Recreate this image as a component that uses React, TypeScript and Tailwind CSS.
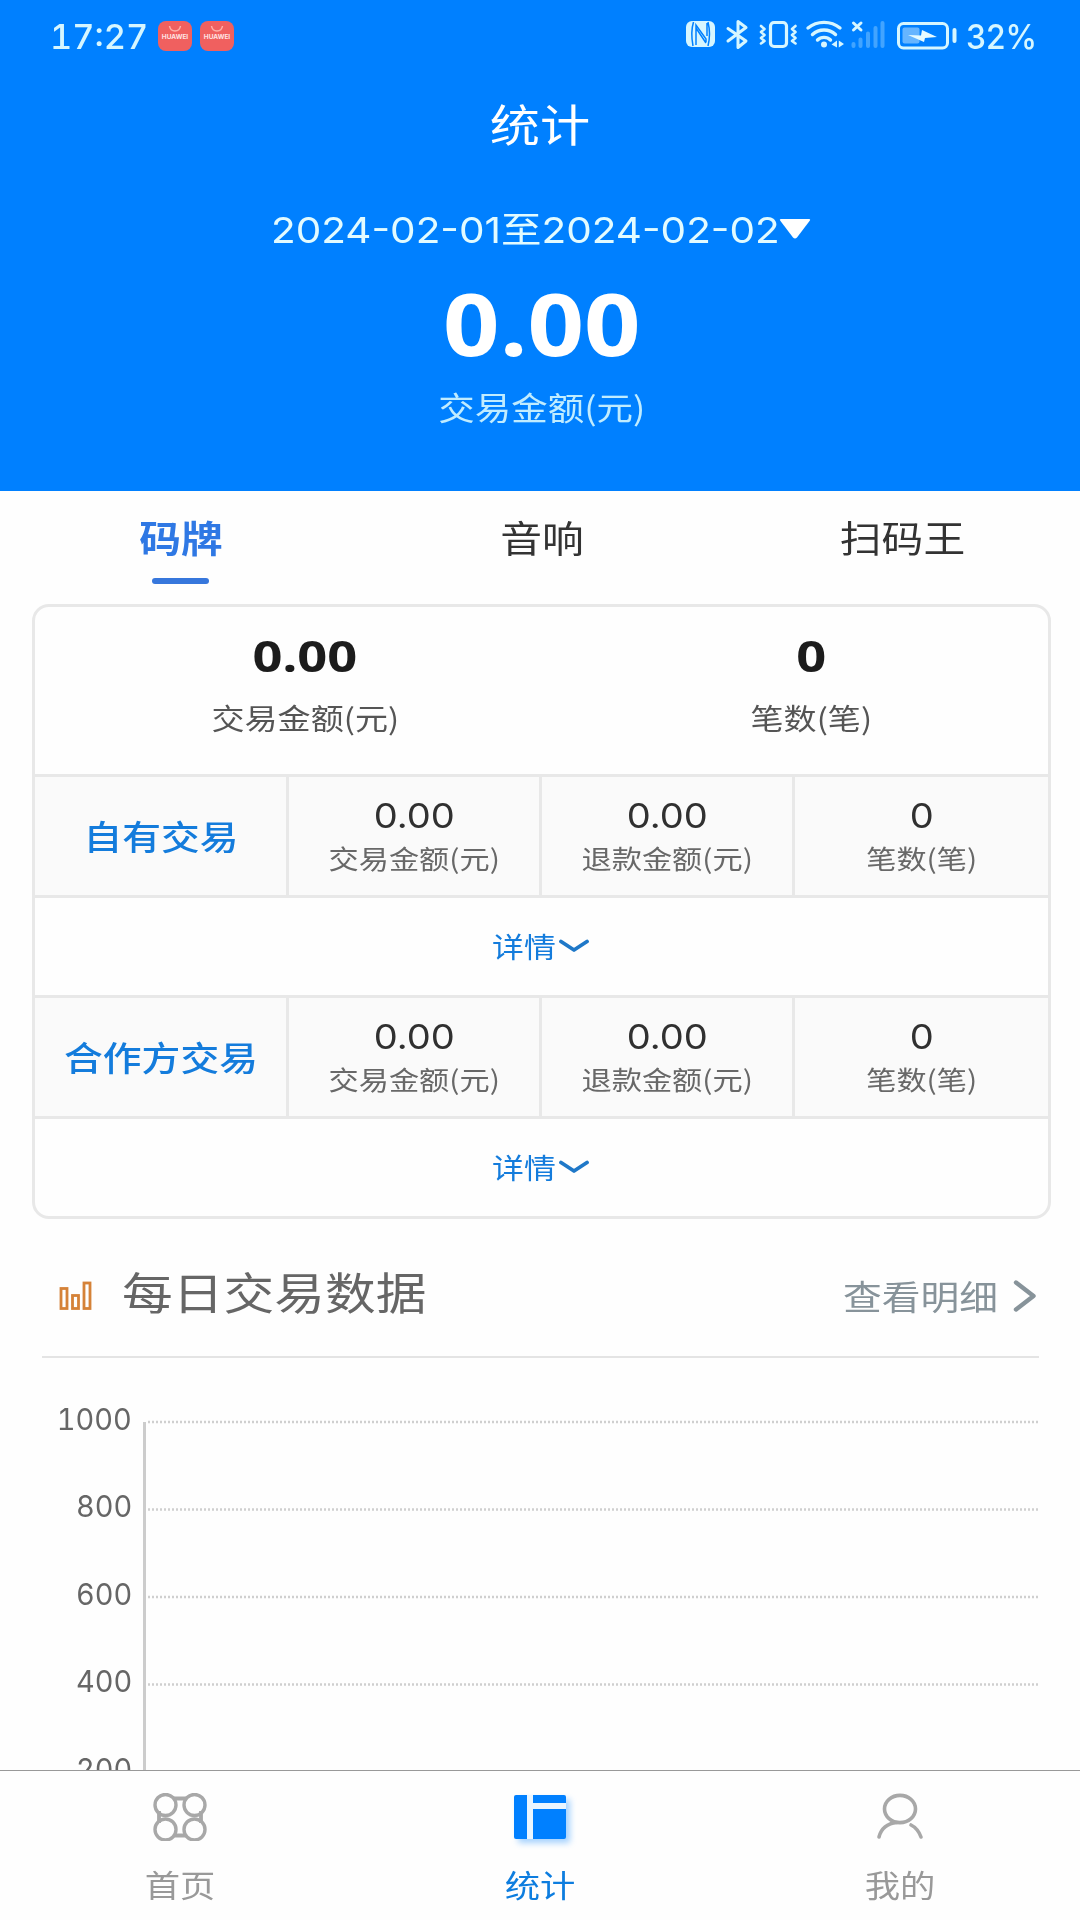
import type { ReactNode } from "react";
import clsx from "clsx";

interface Stat {
  value: string;
  label: string;
}

interface TradeGroup {
  title: string;
  stats: Stat[];
}

const tabs = ["码牌", "音响", "扫码王"];

const groups: TradeGroup[] = [
  {
    title: "自有交易",
    stats: [
      { value: "0.00", label: "交易金额(元)" },
      { value: "0.00", label: "退款金额(元)" },
      { value: "0", label: "笔数(笔)" },
    ],
  },
  {
    title: "合作方交易",
    stats: [
      { value: "0.00", label: "交易金额(元)" },
      { value: "0.00", label: "退款金额(元)" },
      { value: "0", label: "笔数(笔)" },
    ],
  },
];

const axisLabels = ["1000", "800", "600", "400", "200"];

// Wide glyphs, the whole UI uses an extended face
const Wide = ({ children, className }: { children: ReactNode; className?: string }) => (
  <span className={clsx("inline-block whitespace-nowrap", className ?? "scale-x-[1.14]")}>
    {children}
  </span>
);

const AppBadge = () => (
  <div className="flex h-[30px] w-[34px] flex-col items-center rounded-[8px] bg-[#f0605f]">
    <svg width="14" height="8" viewBox="0 0 14 8" className="mt-[4px]" fill="none">
      <path d="M1.5 1 C2.5 7.5 11.500 7.5 12.5 1" stroke="#ffb0a8" strokeWidth="1.5" />
    </svg>
    <span className="mt-[1px] font-['Inter'] text-[6.500px] leading-[7px] font-bold text-[#ffe4e4]">
      HUAWEI
    </span>
  </div>
);

const StatusIcons = () => (
  <svg width="276" height="36" viewBox="684 17 276 36" fill="none" stroke="#d6f6ff">
    {/* nfc */}
    <rect x="686" y="21" width="29" height="26" rx="6" fill="#d6f6ff" stroke="none" />
    <path
      d="M693.500 22 C691 30 691.500 38 693 46 M696 45 V25 L706 39 V42 M696 28 L706 43 M707 23 V36 M708 22 C710 30 710 38 708 46"
      stroke="#0080ff"
      strokeWidth="1.5"
    />
    {/* bluetooth */}
    <path
      d="M728 28.500 L746 41 L738 47.500 V21.500 L746 27.500 L728 41"
      strokeWidth="3"
      strokeLinejoin="round"
      strokeLinecap="round"
    />
    {/* vibrate */}
    <rect x="770.500" y="22.500" width="16" height="24" rx="3.500" strokeWidth="3.200" />
    <path
      d="M761 26 l3.500 3 l-3.500 3 l3.500 3 l-3.500 3 l3.500 3 l-3.500 2.500 M795.500 26 l-3.500 3 l3.500 3 l-3.500 3 l3.500 3 l-3.500 3 l3.500 2.500"
      strokeWidth="2.600"
      strokeLinejoin="round"
      strokeLinecap="round"
    />
    {/* wifi */}
    <path
      d="M808 28 C817 20.500 831 20.500 840 28 M812.500 34.500 C819 28.500 829 28.500 835.500 34.500 M817.500 40 C821 36.500 827 36.500 830.500 40"
      strokeWidth="3.400"
      strokeLinecap="round"
    />
    <circle cx="824" cy="44.500" r="3" fill="#d6f6ff" stroke="none" />
    <path d="M837 40.500 V47.500 L831.500 44.500 Z M838.800 40.500 V47.500 L844 44 Z" fill="#d6f6ff" stroke="none" />
    {/* signal */}
    <path d="M853.500 23 L861 30 M861 23 L853.500 30" strokeWidth="3" strokeLinecap="round" />
    <path
      d="M853.500 44 V46 M860.500 39.500 V46 M868 33.500 V46 M875.500 28 V46 M882.500 23 V46"
      stroke="#42a4ff"
      strokeWidth="4"
      strokeLinecap="round"
    />
    {/* battery */}
    <rect x="898.500" y="23.500" width="49" height="24.500" rx="5" strokeWidth="3" />
    <rect x="902.500" y="27.500" width="17" height="16" rx="2" fill="#66b5ff" stroke="none" />
    <path d="M908 35 L921 35.500 L922 30 L937 37 L925 38 L924 42 Z" fill="#e6fbff" stroke="none" />
    <path d="M954.500 30 V41" strokeWidth="4" strokeLinecap="round" />
  </svg>
);

const HomeIcon = () => (
  <svg width="54" height="48" viewBox="0 0 54 48" fill="none" stroke="#a8a8a8" strokeWidth="3.400">
    <path d="M21 5.500 H33 M21 42.500 H33 M6 18 V30 M48 18 V30" strokeWidth="3.800" />
    <circle cx="12.500" cy="12" r="10.500" />
    <circle cx="41.500" cy="12" r="10.500" />
    <circle cx="12.500" cy="36.500" r="10.500" />
    <circle cx="41.500" cy="36.500" r="10.500" />
  </svg>
);

const StatsIcon = () => (
  <svg
    width="54"
    height="48"
    viewBox="0 0 54 48"
    className="overflow-visible drop-shadow-[4px_4px_3px_rgba(0,128,255,0.35)]"
    fill="#0080ff"
  >
    <path d="M3 2 H14 V46 H3 Q1 46 1 44 V4 Q1 2 3 2 Z" />
    <path d="M20 2 H51 Q53 2 53 4 V10 H20 Z" />
    <path d="M14 2 H20 V46 H14 Z M20 10 H53 V16 H20 Z" fill="#e9f5ff" />
    <path d="M20 16 H53 V44 Q53 46 51 46 H20 Z" />
  </svg>
);

const MineIcon = () => (
  <svg width="54" height="48" viewBox="0 0 54 48" fill="none" stroke="#a8a8a8" strokeWidth="3.600">
    <ellipse cx="27" cy="16" rx="15.500" ry="13.600" />
    <path d="M6 44 C8 36 14 30.500 24 29.500 M38 32 C43 34.500 46 38.500 48 44" strokeLinecap="round" />
  </svg>
);

const navItems = [
  { label: "首页", icon: <HomeIcon />, active: false },
  { label: "统计", icon: <StatsIcon />, active: true },
  { label: "我的", icon: <MineIcon />, active: false },
];

const Header = () => (
  <header className="flex h-[491px] shrink-0 flex-col items-center bg-[#0080ff] text-[#e2fbff]">
    <div className="flex h-[73px] w-full items-center pl-[50px] font-['Inter'] text-[34px] font-medium text-[#d6f6ff]">
      <div className="w-[108px] tabular-nums">
        <Wide className="origin-left scale-x-[1.01]">17:27</Wide>
      </div>
      <div className="flex gap-[8px] pb-[2px]">
        <AppBadge />
        <AppBadge />
      </div>
      <div className="ml-[450px] pb-[3px]">
        <StatusIcons />
      </div>
      <Wide className="ml-[6px] origin-left scale-x-[0.935]">32%</Wide>
    </div>

    <h1 className="mt-[20px] h-[61px] text-[44px] leading-[61px] text-white">
      <Wide>统计</Wide>
    </h1>

    <button className="mt-[46px] flex h-[60px] items-center pl-[1px] text-left font-['Inter','Noto_Sans_CJK_SC',sans-serif] text-[36px] leading-[60px]">
      <div className="w-[507px]">
        <Wide className="origin-left scale-x-[1.125]">2024-02-01至2024-02-02</Wide>
      </div>
      <svg width="32" height="22" viewBox="0 0 32 22" className="mb-[3px] ml-[1px]" fill="#ffffff">
        <path d="M2 1 H30 Q32 1 30.500 3 L18 19.500 Q16 21.500 14 19.500 L1.500 3 Q0 1 2 1 Z" />
      </svg>
    </button>

    <div className="mt-[12px] h-[101px] pl-[3px] font-['Noto_Sans'] text-[86px] leading-[101px] font-bold text-white">
      <Wide className="scale-x-[1.15]">0.00</Wide>
    </div>
    <div className="mt-[13px] h-[40px] pl-[3px] text-[32px] leading-[40px] text-[#c0ecff]">
      <Wide>交易金额(元)</Wide>
    </div>
  </header>
);

const Tabs = () => (
  <div className="grid h-[113px] w-[1083px] shrink-0 grid-cols-3 pt-[16px] text-[37px] leading-[60px] text-[#333333]">
    {tabs.map((tab, i) => (
      <div key={tab} className="flex flex-col items-center">
        <Wide className={clsx("scale-x-[1.13]", i === 0 && "font-bold text-[#2f78e4]")}>{tab}</Wide>
        {i === 0 && <div className="mt-[11px] h-[6px] w-[57px] rounded-full bg-[#3777dc]" />}
      </div>
    ))}
  </div>
);

const SummaryItem = ({ value, label }: Stat) => (
  <div className="flex flex-col items-center pt-[19px]">
    <div className="h-[60px] font-['Noto_Sans'] text-[43px] leading-[60px] font-bold text-[#1c1c1c]">
      <Wide className="scale-x-[1.22]">{value}</Wide>
    </div>
    <div className="mt-[11px] h-[40px] text-[29px] leading-[40px] text-[#555555]">
      <Wide>{label}</Wide>
    </div>
  </div>
);

const TradeRow = ({ title, stats }: TradeGroup) => (
  <>
    <div className="grid h-[121px] grid-cols-[254px_253px_253px_253px] border-t-[3px] border-[#e8e8e8] bg-[#fafafa]">
      <div className="flex justify-center border-r-[3px] border-[#e8e8e8] pt-[37px] text-[34px] leading-[44px] font-medium text-[#147cdc]">
        <Wide>{title}</Wide>
      </div>
      {stats.map((s) => (
        <div
          key={s.label}
          className="flex flex-col items-center border-r-[3px] border-[#e8e8e8] pt-[17px] last:border-r-0"
        >
          <div className="h-[44px] font-['Inter'] text-[34px] leading-[44px] text-[#303030]">
            <Wide className="scale-x-[1.12]">{s.value}</Wide>
          </div>
          <div className="mt-[2px] h-[36px] text-[26.500px] leading-[36px] text-[#686868]">
            <Wide>{s.label}</Wide>
          </div>
        </div>
      ))}
    </div>
    <div className="flex h-[100px] items-center justify-center border-t-[3px] border-[#e8e8e8] pb-[1px] pl-[2px] text-[28px] text-[#147cdc]">
      <Wide>详情</Wide>
      <svg width="30" height="14" viewBox="0 0 30 14" className="ml-[6px]" fill="none">
        <path d="M2 2.500 L15 11 L28 2.500" stroke="#1f78c8" strokeWidth="3.800" strokeLinecap="round" strokeLinejoin="round" />
      </svg>
    </div>
  </>
);

const DailyChart = () => (
  <section className="flex min-h-0 flex-1 flex-col">
    <div className="flex h-[137px] shrink-0 items-center pl-[59px]">
      <svg width="33" height="30" viewBox="0 0 33 30" className="mt-[16px]" fill="none" stroke="#d58238" strokeWidth="2.800">
        <rect x="2" y="7.500" width="6" height="20" />
        <rect x="13.500" y="14.500" width="6" height="13" />
        <rect x="25" y="2" width="6" height="25.500" />
      </svg>
      <h2 className="mt-[7px] ml-[30px] flex-1 text-[44.500px] leading-[60px] text-[#666666]">
        <Wide className="origin-left scale-x-[1.14]">每日交易数据</Wide>
      </h2>
      <div className="mt-[16px] mr-[43px] flex items-center text-[34px] leading-[50px] text-[#87939a]">
        <Wide className="origin-right scale-x-[1.14]">查看明细</Wide>
        <svg width="24" height="32" viewBox="0 0 24 32" className="ml-[15px]" fill="none">
          <path d="M3 2.500 L20.500 16 L3 29.500" stroke="#87939a" strokeWidth="4.400" strokeLinecap="round" strokeLinejoin="round" />
        </svg>
      </div>
    </div>
    <div className="ml-[42px] h-[2px] w-[997px] shrink-0 bg-[#e4e4e4]" />

    <div className="flex min-h-0 flex-1 overflow-hidden pt-[17px]">
      <div className="w-[132px] shrink-0 text-right font-['Inter'] text-[30px] text-[#666666] tabular-nums">
        {axisLabels.map((label) => (
          <div key={label} className="h-[87.400px] leading-[88px]">
            <Wide className="origin-right scale-x-[0.965]">{label}</Wide>
          </div>
        ))}
      </div>
      <svg width="900" height="400" viewBox="0 0 900 400" className="ml-[9px] shrink-0" fill="none">
        <path d="M3.500 47 V400" stroke="#cccccc" strokeWidth="3" />
        {[47, 134.5, 222, 309.5].map((y) => (
          <path key={y} d={`M7 ${y} H898`} stroke="#cfcfcf" strokeWidth="2.500" strokeDasharray="2 2" />
        ))}
      </svg>
    </div>
  </section>
);

const App = () => {
  return (
    <div className="flex h-[1920px] w-[1080px] flex-col overflow-hidden bg-[#fefefe] font-['Noto_Sans_CJK_SC',sans-serif]">
      <Header />
      <Tabs />

      <main className="mr-[29px] ml-[32px] h-[615px] shrink-0 overflow-hidden rounded-[17px] border-[3px] border-[#e8e8e8]">
        <div className="grid h-[167px] grid-cols-[540px_473px]">
          <SummaryItem value="0.00" label="交易金额(元)" />
          <SummaryItem value="0" label="笔数(笔)" />
        </div>
        {groups.map((g) => (
          <TradeRow key={g.title} {...g} />
        ))}
      </main>

      <DailyChart />

      <nav className="grid h-[150px] shrink-0 grid-cols-3 border-t border-[#999999]">
        {navItems.map((item) => (
          <div
            key={item.label}
            className={clsx(
              "flex flex-col items-center pt-[22px] text-[31px] leading-[40px]",
              item.active ? "text-[#0d7ddf]" : "text-[#999999]"
            )}
          >
            {item.icon}
            <Wide className="mt-[23px] scale-x-[1.14]">{item.label}</Wide>
          </div>
        ))}
      </nav>
    </div>
  );
};

export default App;
